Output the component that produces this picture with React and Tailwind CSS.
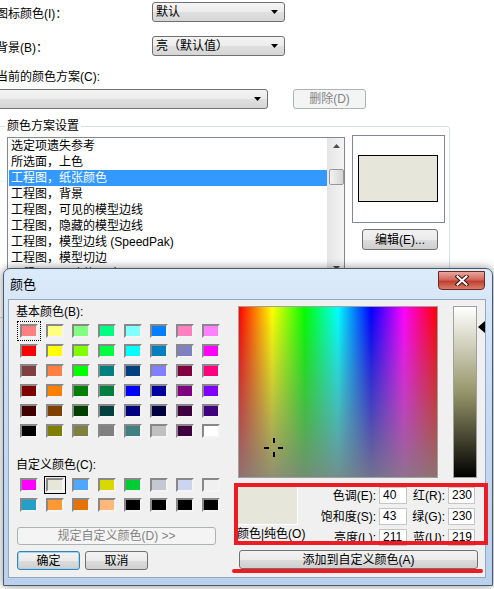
import React from 'react';

const basicColors = [
  ['bg-[#ff8080]', 'bg-[#ffff80]', 'bg-[#80ff80]', 'bg-[#00ff80]', 'bg-[#80ffff]', 'bg-[#0080ff]', 'bg-[#ff80c0]', 'bg-[#ff80ff]'],
  ['bg-[#ff0000]', 'bg-[#ffff00]', 'bg-[#80ff00]', 'bg-[#00ff40]', 'bg-[#00ffff]', 'bg-[#0080c0]', 'bg-[#8080c0]', 'bg-[#ff00ff]'],
  ['bg-[#804040]', 'bg-[#ff8040]', 'bg-[#00ff00]', 'bg-[#008080]', 'bg-[#004080]', 'bg-[#8080ff]', 'bg-[#800040]', 'bg-[#ff0080]'],
  ['bg-[#800000]', 'bg-[#ff8000]', 'bg-[#008000]', 'bg-[#008040]', 'bg-[#0000ff]', 'bg-[#0000a0]', 'bg-[#800080]', 'bg-[#8000ff]'],
  ['bg-[#400000]', 'bg-[#804000]', 'bg-[#004000]', 'bg-[#004040]', 'bg-[#000080]', 'bg-[#000040]', 'bg-[#400040]', 'bg-[#400080]'],
  ['bg-[#000000]', 'bg-[#808000]', 'bg-[#808040]', 'bg-[#808080]', 'bg-[#408080]', 'bg-[#c0c0c0]', 'bg-[#400040]', 'bg-[#ffffff]'],
];

const customColors = [
  ['bg-[#ff00ff]', 'bg-[#e6e6db]', 'bg-[#4da6ff]', 'bg-[#d9d900]', 'bg-[#00cc33]', 'bg-[#c4c8d0]', 'bg-[#cdd4f0]', 'bg-[#f0f0f0]'],
  ['bg-[#22a0c8]', 'bg-[#ff9933]', 'bg-[#e67300]', 'bg-[#ffb878]', 'bg-[#000000]', 'bg-[#000000]', 'bg-[#000000]', 'bg-[#000000]'],
];

const schemeItems = [
  '选定项遗失参考',
  '所选面，上色',
  '工程图，纸张颜色',
  '工程图，背景',
  '工程图，可见的模型边线',
  '工程图，隐藏的模型边线',
  '工程图，模型边线 (SpeedPak)',
  '工程图，模型切边',
  '工程图，更改的尺寸',
];

const fields = [
  ['色调(E):', '40', '红(R):', '230'],
  ['饱和度(S):', '43', '绿(G):', '230'],
  ['亮度(L):', '211', '蓝(U):', '219'],
];

function Arrow() {
  return (
    <svg width="7" height="4" viewBox="0 0 7 4">
      <path d="M0 0h7L3.5 4z" fill="#000" />
    </svg>
  );
}

function Combo({ className = '', children }) {
  return (
    <div className={`flex h-[20px] items-center justify-between rounded-[3px] border border-[#707070] bg-[linear-gradient(to_bottom,#f4f4f4,#ececec_50%,#e0e0e0_50%,#d6d6d6)] pl-[3px] pr-[6px] ${className}`}>
      <span>{children}</span>
      <Arrow />
    </div>
  );
}

function WinButton({ className = '', disabled = false, focused = false, children }) {
  const look = disabled
    ? 'border-[#adb2b5] bg-[#f4f4f4] text-[#838383]'
    : focused
      ? 'border-[#3c7fb1] bg-[linear-gradient(to_bottom,#f2f2f2,#ebebeb_50%,#dddddd_50%,#cfcfcf)] text-black shadow-[inset_0_0_0_1px_#9fd5f5]'
      : 'border-[#707070] bg-[linear-gradient(to_bottom,#f2f2f2,#ebebeb_50%,#dddddd_50%,#cfcfcf)] text-black';
  return (
    <div className={`flex items-center justify-center rounded-[3px] border ${look} ${className}`}>
      {children}
    </div>
  );
}

function Swatch({ color, extra = '' }) {
  return (
    <div className={`h-[14px] w-[18px] border-2 border-t-[#888888] border-l-[#888888] border-r-[#f4f4f4] border-b-[#f4f4f4] ${color} ${extra}`} />
  );
}

function MainWindow() {
  return (
    <div className="pt-[2px] text-[12px] leading-[16px]">
      <div className="flex h-[20px] items-center">
        <span className="ml-[-4px] mt-[3px] w-[156px]">图标颜色(I)：</span>
        <Combo className="w-[133px]">默认</Combo>
      </div>
      <div className="mt-[14px] flex h-[20px] items-center">
        <span className="ml-[-4px] mt-[3px] w-[156px]">背景(B)：</span>
        <Combo className="w-[133px]">亮（默认值）</Combo>
      </div>
      <div className="ml-[-4px] mt-[13px] h-[16px]">当前的颜色方案(C):</div>
      <div className="mt-[4px] flex h-[20px] items-center gap-[25px]">
        <Combo className="ml-[-10px] w-[278px]" />
        <WinButton disabled className="h-[20px] w-[73px]">删除(D)</WinButton>
      </div>

      <fieldset className="ml-[-3px] mt-[9px] h-[200px] w-[453px] rounded-[3px] border border-[#d5dfe5] pl-[9px]">
        <legend className="ml-[-2px] px-[2px] leading-[16px]">颜色方案设置</legend>
        <div className="mt-[3px] flex items-start gap-[7px]">
          <div className="flex h-[136px] w-[338px] overflow-hidden border border-[#828790] bg-white">
            <div className="flex-1">
              {schemeItems.map((item, i) => (
                <div
                  key={item}
                  className={i === 2 ? 'ml-[1px] h-[16px] bg-[#3399ff] pl-[2px] text-white' : 'ml-[1px] h-[16px] pl-[2px]'}
                >
                  {item}
                </div>
              ))}
            </div>
            <div className="flex w-[17px] flex-col items-center border-l border-[#e6e6e6] bg-[linear-gradient(to_right,#e6e6e6,#f4f4f4)]">
              <svg className="mt-[6px]" width="7" height="4" viewBox="0 0 7 4">
                <path d="M0 4h7L3.5 0z" fill="#4d4d4d" />
              </svg>
              <div className="mt-[21px] h-[16px] w-[15px] rounded-[2px] border border-[#979797] bg-[linear-gradient(to_right,#f2f2f2,#e4e4e4_50%,#d4d4d4)]" />
              <svg className="mt-[81px]" width="7" height="4" viewBox="0 0 7 4">
                <path d="M0 0h7L3.5 4z" fill="#4d4d4d" />
              </svg>
            </div>
          </div>
          <div className="mt-[-2px] flex flex-col">
            <div className="h-[88px] w-[93px] border border-[#828790] bg-white pl-[5px] pt-[19px]">
              <div className="h-[47px] w-[80px] border border-black bg-[#e6e6db]" />
            </div>
            <WinButton className="ml-[10px] mt-[6px] h-[21px] w-[76px]">编辑(E)...</WinButton>
          </div>
        </div>
      </fieldset>
    </div>
  );
}

function ColorDialog() {
  return (
    <div className="absolute left-[3px] top-[268px] flex h-[318px] w-[490px] flex-col rounded-t-[7px] border border-[#4a5a6e] bg-[linear-gradient(to_bottom,#dcebfa,#c7dcf3_40%,#b9d1ec)] shadow-[0_0_10px_rgba(0,0,0,0.45)]">
      <div className="flex h-[31px] items-start justify-between">
        <span className="ml-[6px] mt-[8px] text-[13px] leading-[16px]">颜色</span>
        <div className="mr-[7px] mt-[2px] flex h-[19px] w-[47px] items-center justify-center rounded-b-[4px] border border-[#6d2620] bg-[linear-gradient(to_bottom,#e8a89f,#d2685c_45%,#c0402f_55%,#d97c6c)]">
          <svg width="14" height="11" viewBox="0 0 14 11">
            <path d="M2.5 1.5l9 8M11.5 1.5l-9 8" stroke="#3a1612" strokeWidth="4" strokeLinecap="square" />
            <path d="M2.5 1.5l9 8M11.5 1.5l-9 8" stroke="#ffffff" strokeWidth="2" strokeLinecap="square" />
          </svg>
        </div>
      </div>

      <div className="relative ml-[5px] flex h-[277px] w-[476px] bg-[#f0f0f0] shadow-[0_0_0_1px_#92a8c2] text-[12px] leading-[16px]">
        <div className="flex w-[225px] flex-col pl-[7px] pt-[4px]">
          <div>基本颜色(B):</div>
          <div className="ml-[4px] mt-[4px] grid grid-cols-[repeat(8,18px)] gap-x-[8px] gap-y-[6px]">
            {basicColors.flat().map((c, i) => (
              <Swatch
                key={i}
                color={c}
                extra={i === 0 ? 'outline-1 outline-dotted outline-black outline-offset-[2px]' : ''}
              />
            ))}
          </div>
          <div className="mt-[19px]">自定义颜色(C):</div>
          <div className="ml-[4px] mt-[5px] grid grid-cols-[repeat(8,18px)] gap-x-[8px] gap-y-[6px]">
            {customColors.flat().map((c, i) => (
              <Swatch
                key={i}
                color={c}
                extra={i === 1 ? 'outline-1 outline-black outline-offset-[1px]' : ''}
              />
            ))}
          </div>
          <WinButton disabled className="ml-[1px] mt-[15px] h-[18px] w-[199px]">规定自定义颜色(D) &gt;&gt;</WinButton>
          <div className="ml-[1px] mt-[6px] flex gap-[5px]">
            <WinButton focused className="h-[19px] w-[63px]">确定</WinButton>
            <WinButton className="h-[19px] w-[63px]">取消</WinButton>
          </div>
        </div>

        <div className="flex flex-1 flex-col pt-[6px]">
          <div className="flex items-start">
            <div className="relative ml-[4px] h-[172px] w-[200px] border border-[#a0a0a0] bg-[linear-gradient(to_bottom,rgba(128,128,128,0),rgba(128,128,128,0.88)),linear-gradient(to_right,#ff0000,#ffff00_16.7%,#00ff00_33.3%,#00ffff_50%,#0000ff_66.7%,#ff00ff_83.3%,#ff0000)]">
              <svg className="absolute left-[25px] top-[131px]" width="20" height="20" viewBox="0 0 20 20">
                <path d="M9 0h2v5H9zM9 14h2v5H9zM0 9h5v2H0zM14 9h5v2h-5z" fill="#000" />
              </svg>
            </div>
            <div className="ml-[15px] h-[172px] w-[24px] border border-[#a0a0a0] bg-[linear-gradient(to_bottom,#ffffff,#96966a_50%,#000000)]" />
            <svg className="ml-[1px] mt-[15px]" width="7" height="12" viewBox="0 0 7 12">
              <path d="M7 0v12L0 6z" fill="#000" />
            </svg>
          </div>

          <div className="mt-[7px] flex items-start">
            <div className="ml-[3px] flex w-[81px] flex-col">
              <div className="h-[40px] w-[61px] border border-t-[#a0a0a0] border-l-[#a0a0a0] border-r-white border-b-white bg-[#e6e6db]" />
              <div className="mt-[1px] whitespace-nowrap">颜色|纯色(O)</div>
            </div>
            <div className="grid grid-cols-[61px_28px_41px_27px] items-center gap-y-[4px] pt-[2px]">
              {fields.map(([l1, v1, l2, v2]) => (
                <React.Fragment key={l1}>
                  <span className="pr-[3px] text-right whitespace-nowrap">{l1}</span>
                  <div className="h-[17px] border border-[#c5c5c5] bg-white pl-[3px] leading-[15px]">{v1}</div>
                  <span className="pr-[3px] text-right whitespace-nowrap">{l2}</span>
                  <div className="h-[17px] border border-[#c5c5c5] bg-white pl-[3px] leading-[15px]">{v2}</div>
                </React.Fragment>
              ))}
            </div>
          </div>

          <WinButton className="ml-[5px] mt-[4px] h-[19px] w-[239px]">添加到自定义颜色(A)</WinButton>
        </div>

        <div className="absolute left-[225px] top-[183px] h-[62px] w-[254px] border-4 border-[#ed1c24]" />
        <div className="absolute left-[223px] top-[269px] h-[4px] w-[251px] rounded-[2px] bg-[#ed1c24]" />
      </div>
    </div>
  );
}

export default function App() {
  return (
    <div className="relative h-[589px] w-[494px] overflow-hidden bg-white font-['Liberation_Sans','Noto_Sans_CJK_SC',sans-serif] text-black">
      <MainWindow />
      <ColorDialog />
    </div>
  );
}
